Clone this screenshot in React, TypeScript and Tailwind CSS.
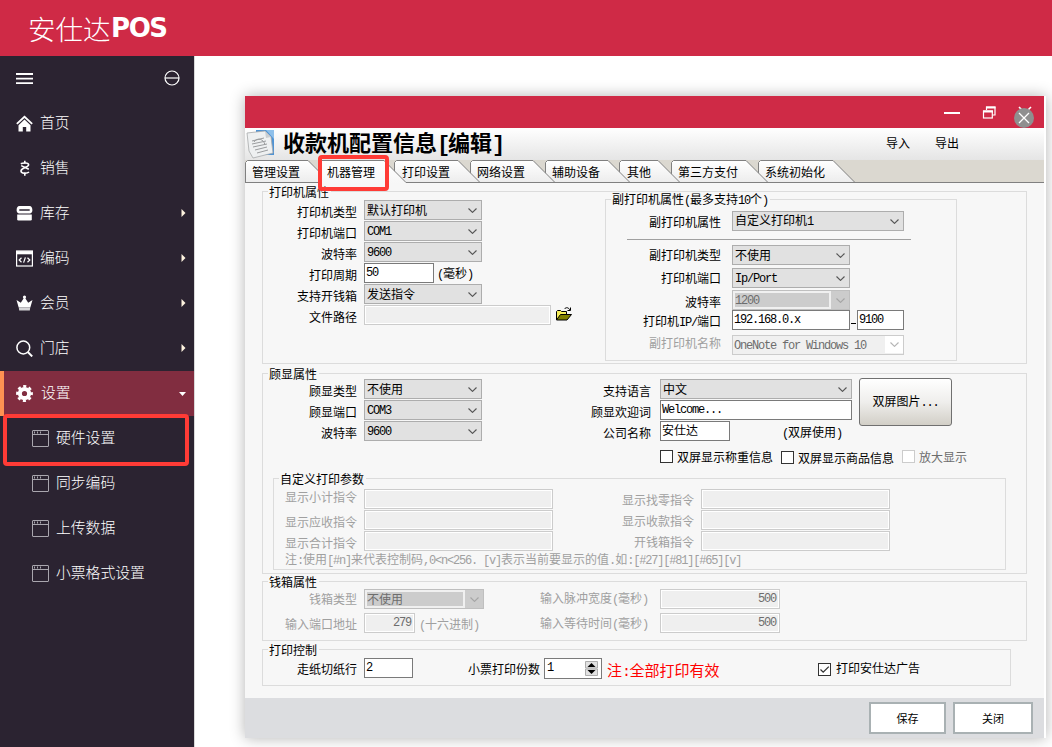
import type { ReactNode } from "react";
import clsx from "clsx";

/* SimSun-like metrics: 12px per chinese char, 6px per latin char */
function Txt({ children }: { children: string }) {
    return (
        <span className="whitespace-pre">
            {children.split(/([\x20-\x7e]+)/).map((part, i) => (
                i % 2 === 1
                ? <span key={i} className="font-['Liberation_Mono',monospace] tracking-[-0.1em]">{part}</span>
                : <span key={i}>{part}</span>
            ))}
        </span>
    )
}

function Chevron({ className = "text-[#555555]" }: { className?: string }) {
    return (
        <svg width="9" height="5" viewBox="0 0 9 5" fill="none" stroke="currentColor" strokeWidth="1.1" className={clsx("shrink-0", className)}>
            <path d="M0.5 0.5 4.5 4.4 8.5 0.5" />
        </svg>
    )
}

interface ControlProps {
    value?: string,
    className?: string,
    disabled?: boolean
}

function Select({ value = "", className = "w-[118px]", disabled }: ControlProps) {
    if (disabled) {
        return (
            <div className={clsx("h-5 shrink-0 flex border border-[#bfbfbf] bg-[#f0f0f0] text-[#6d6d6d]", className)}>
                <div className="flex-1 m-[2px] bg-[#cccccc] flex items-center pb-px"><Txt>{value}</Txt></div>
                <div className="w-[18px] bg-[#cccccc] flex justify-center items-center"><Chevron className="text-[#a5a5a5]" /></div>
            </div>
        )
    }

    return (
        <div className={clsx("h-5 shrink-0 flex items-center justify-between border border-[#adadad] bg-[#e1e1e1] pl-0.5 pr-1", className)}>
            <Txt>{value}</Txt>
            <Chevron />
        </div>
    )
}

function Input({ value = "", className, disabled }: ControlProps) {
    return (
        <div className={clsx(
            "h-5 shrink-0 flex items-center border pl-px pr-[3px] pb-[3px]",
            disabled ? "border-[#cccccc] bg-[#efefef] text-[#6d6d6d] shadow-[inset_0_0_0_1px_#ffffff]" : "border-[#7a7a7a] bg-white",
            className
        )}>
            <Txt>{value}</Txt>
        </div>
    )
}

interface RowProps {
    label: string,
    labelClass?: string,
    className?: string,
    disabled?: boolean,
    children: ReactNode
}

function Row({ label, labelClass = "w-[94px] mr-[7px] pt-1", className, disabled, children }: RowProps) {
    return (
        <div className={clsx("flex h-5", className)}>
            <div className={clsx("h-5 shrink-0 flex items-center justify-end", labelClass, disabled && "text-[#a0a0a0]")}>
                <Txt>{label}</Txt>
            </div>
            {children}
        </div>
    )
}

function Group({ legend, className, children }: { legend: string, className: string, children: ReactNode }) {
    return (
        <div className={clsx("relative shrink-0 border border-[#dcdcdc]", className)}>
            <div className="absolute -top-2 left-[5px] h-4 pl-px pr-0.5 flex items-center bg-[#f7f7f7]"><Txt>{legend}</Txt></div>
            {children}
        </div>
    )
}

function Check({ label, checked, disabled, className, labelClass }: { label: string, checked?: boolean, disabled?: boolean, className?: string, labelClass?: string }) {
    return (
        <div className={clsx("flex items-center h-[13px]", disabled && "text-[#6d6d6d]", className)}>
            <div className={clsx("w-[13px] h-[13px] mr-1 border bg-white", disabled ? "border-[#cccccc]" : "border-[#333333]")}>
                {checked && (
                    <svg width="11" height="11" viewBox="0 0 11 11" fill="none" stroke="#333333" strokeWidth="1.3">
                        <path d="M1.5 5.5 4.2 8.2 9.8 2.6" />
                    </svg>
                )}
            </div>
            <span className={labelClass}>{label}</span>
        </div>
    )
}

const tabs = [
    { name: "管理设置", shape: 63, box: "w-[74px] pl-[7px]" },
    { name: "机器管理", shape: 65, box: "w-[75px] pl-[8px]", active: true },
    { name: "打印设置", shape: 64, box: "w-[76px] pl-[8px]" },
    { name: "网络设置", shape: 63, box: "w-[75px] pl-[7px]" },
    { name: "辅助设备", shape: 63, box: "w-[74px] pl-[7px]" },
    { name: "其他", shape: 39, box: "w-[52px] pl-[8px]" },
    { name: "第三方支付", shape: 75, box: "w-[87px] pl-[7px]" },
    { name: "系统初始化", shape: 75, box: "w-[97px] pl-[7px]" }
]

function Tabs() {
    return (
        <div className="relative h-[23px] shrink-0 flex bg-[#dbd8d0] border-b border-[#808080]">
            {tabs.map(({ name, shape, box, active }, i) => (
                <div key={name} className={clsx("relative h-[23px] shrink-0 flex items-center pt-px", box)} style={{ zIndex: active ? 10 : 8 - i }}>
                    <svg className="absolute left-0 top-0" width={shape + 23} height="23">
                        <defs>
                            <linearGradient id={`tab${i}`} x2="0" y2="1">
                                <stop offset="0" stopColor="#ffffff" />
                                <stop offset="1" stopColor={active ? "#f7f7f7" : "#ececec"} />
                            </linearGradient>
                        </defs>
                        <path d={`M0.5 23V2.5L2.5 0.5H${shape}L${shape + 22} 22.5V23Z`} fill={`url(#tab${i})`} />
                        <path d={`M0.5 22.5V2.5L2.5 0.5H${shape}L${shape + 22} 22.5${active ? "" : "H0"}`} fill="none" stroke="#808080" />
                    </svg>
                    <span className="relative">{name}</span>
                </div>
            ))}
            <div className="absolute z-20 left-[73px] -top-[5px] w-[71px] h-9 border-4 border-[#ff3b36] rounded" />
        </div>
    )
}

function WindowIcon() {
    return (
        <svg width="17" height="17" viewBox="0 0 17 17" fill="none" stroke="#a9a6ae">
            <rect x="0.5" y="0.5" width="16" height="16" rx="0.5" />
            <path d="M1 4.5H16M2.5 1.5V3.5M5.5 1.5V3.5M8.5 1.5V3.5" />
        </svg>
    )
}

const icons = {
    home: (
        <g fill="#ffffff">
            <path d="M8.5 0.5 0.2 8.2 1.5 9.5 8.5 3 15.5 9.5 16.8 8.2Z" />
            <path d="M8.5 4.6 2.5 10.2V16.5H6.8V12H10.2V16.5H14.5V10.2Z" />
        </g>
    ),
    sale: (
        <g fill="none" stroke="#ffffff" strokeWidth="1.6">
            <path d="M4.8 3.8C7 2.6 12.6 2.4 12.6 4.8 12.6 7.6 5 7.6 5 11 5 13.8 11 13.8 13 12" />
            <path d="M8.8 0.8V3.4M5.2 5.6 12.8 9.2M8.8 12.6V15.8" />
        </g>
    ),
    stock: (
        <g fill="#ffffff">
            <path fillRule="evenodd" d="M3.5 1H13.5C15.5 1 16.4 3 16.4 5.2 16.4 7 15.3 8.4 13.8 8.4H3.2C1.7 8.4 0.6 7 0.6 5.2 0.6 3 1.5 1 3.5 1ZM3.3 4.3V5.7H13.7V4.3Z" />
            <path d="M1.2 9.6H15.8V14.2Q15.8 15.5 14.5 15.5H2.5Q1.2 15.5 1.2 14.2Z" />
        </g>
    ),
    code: (
        <g fill="none" stroke="#ffffff">
            <rect x="0.6" y="1" width="15.8" height="15" strokeWidth="1.2" />
            <path d="M0.5 2.7H16.5" strokeWidth="3.2" />
            <path d="M5.5 7.8 3.2 10 5.5 12.2M11.5 7.8 13.8 10 11.5 12.2M9.4 7.4 7.6 12.6" strokeWidth="1.2" />
        </g>
    ),
    member: (
        <g>
            <path d="M0.5 5 4.8 7.8 8.5 2 12.2 7.8 16.5 5 14.3 12.5H2.7Z" fill="#ffffff" />
            <circle cx="8.5" cy="2" r="1.6" fill="#ffffff" />
            <path d="M2.8 12.5H14.2L13.8 15.5H3.2Z" fill="#d6d5d8" />
        </g>
    ),
    shop: (
        <g fill="none" stroke="#ffffff" strokeWidth="1.5">
            <circle cx="7.3" cy="7.5" r="6.4" />
            <path d="M11.8 12 16.2 16.4" strokeWidth="2" />
        </g>
    ),
    setting: (
        <g>
            <circle cx="8.5" cy="8.5" r="4.6" fill="none" stroke="#ffffff" strokeWidth="4" />
            <circle cx="8.5" cy="8.5" r="7.2" fill="none" stroke="#ffffff" strokeWidth="2.4" strokeDasharray="3.1 2.555" strokeDashoffset="1.55" />
        </g>
    )
}

const menu = [
    { name: "首页", icon: icons.home },
    { name: "销售", icon: icons.sale },
    { name: "库存", icon: icons.stock, more: true },
    { name: "编码", icon: icons.code, more: true },
    { name: "会员", icon: icons.member, more: true },
    { name: "门店", icon: icons.shop, more: true }
]

const submenu = ["硬件设置", "同步编码", "上传数据", "小票格式设置"]

function Sidebar() {
    return (
        <aside className="relative w-[195px] shrink-0 bg-[#2b2331] border-r border-[#d9d9d9] text-white text-[14.8px]">
            <div className="h-[45px] flex items-center justify-between pl-4 pr-[14px] pb-px">
                <svg width="17" height="11" viewBox="0 0 17 11" fill="#ffffff">
                    <path d="M0 0H17V2H0ZM0 4.7H17V6.5H0ZM0 9.2H17V11H0Z" />
                </svg>
                <svg width="16" height="16" viewBox="0 0 16 16" fill="none" stroke="#ffffff" strokeWidth="1.2">
                    <circle cx="8" cy="8" r="7" />
                    <path d="M1 8H15" />
                </svg>
            </div>
            {menu.map(({ name, icon, more }) => (
                <div key={name} className="h-[45px] flex items-center pl-4 pr-2 pb-0.5 font-light">
                    <svg width="17" height="17" viewBox="0 0 17 17" className="mt-0.5">{icon}</svg>
                    <span className="flex-1 ml-[7px] pb-px">{name}</span>
                    {more && <svg width="5" height="8" viewBox="0 0 5 8" fill="#fff4e0"><path d="M0.5 0 4.5 4 0.5 8Z" /></svg>}
                </div>
            ))}
            <div className="h-[45px] flex items-center pl-3 pr-2 pb-0.5 border-l-4 border-[#ff9152] bg-[#812d40] font-light">
                <svg width="17" height="17" viewBox="0 0 17 17" className="mt-0.5">{icons.setting}</svg>
                <span className="flex-1 ml-2 pb-px">设置</span>
                <svg width="7" height="4" viewBox="0 0 7 4" className="mt-0.5" fill="#ffffff"><path d="M0 0H7L3.5 4Z" /></svg>
            </div>
            {submenu.map((name) => (
                <div key={name} className="h-[45px] flex items-center pl-8 font-light">
                    <WindowIcon />
                    <span className="ml-[7px] pb-[3px]">{name}</span>
                </div>
            ))}
            <div className="absolute left-[3px] top-[358px] w-[186px] h-[52px] border-4 border-[#ff3b36] rounded" />
        </aside>
    )
}

function TitleBar() {
    return (
        <div className="h-8 shrink-0 bg-[#cf2a46] flex justify-end">
            <svg width="109" height="32" viewBox="0 0 109 32" fill="none" stroke="#ffffff">
                <path d="M9 17H25" strokeWidth="2" />
                <path d="M51.5 14V11H60V19H57.5" strokeWidth="1.2" />
                <path d="M51 11.5H60.5" strokeWidth="2" />
                <rect x="48.5" y="15" width="8.8" height="7" strokeWidth="1.2" />
                <path d="M48 15.5H58" strokeWidth="2" />
                <path d="M84 11 88 15M96 11 92 15" strokeWidth="1.6" />
                <circle cx="89" cy="22" r="10" fill="#8f8f8f" stroke="none" />
                <path d="M84 17 94 27M94 17 84 27" strokeWidth="1.3" />
            </svg>
        </div>
    )
}

function DocIcon() {
    return (
        <svg width="30" height="30" viewBox="0 0 30 30">
            <rect x="11" y="1" width="18" height="25" fill="#4f93d4" />
            <path d="M21 1H29V10Z" fill="#8fc0ea" />
            <path d="M2 4 20 2 26 8 28 24 8 29 4 22Z" fill="#eef0f1" stroke="#a7a9ab" strokeWidth="0.8" />
            <path d="M20 2 21 9 26 8Z" fill="#c9ced2" />
            <path d="M7 12 19 9M7 15 21 12M8 18 22 15M10 21 22 18M12 24 23 21M9 13C12 8 19 10 20 16" stroke="#9a9c9e" fill="none" />
        </svg>
    )
}

function FolderIcon() {
    return (
        <svg width="17" height="14" viewBox="0 0 17 14" className="ml-[5px] mt-0.5">
            <path d="M0.5 13V4.5L1.5 3.5H4.5L5.5 4.5H10.5V7" fill="#f7ef5a" stroke="#000000" />
            <path d="M0.5 13 4.5 7.5H15.5L11 13Z" fill="#808000" stroke="#000000" />
            <path d="M8.5 2C10 0 12.5 0.3 14 3M14.5 0.5V3.5H11.5" fill="none" stroke="#000000" />
        </svg>
    )
}

const subLabel = "w-[115px] mr-[11px]"

function PrinterGroup() {
    return (
        <Group legend="打印机属性" className="w-[765px] h-[173px] flex">
            <div className="w-[342px] pt-2 flex flex-col gap-px">
                <Row label="打印机类型"><Select value="默认打印机" /></Row>
                <Row label="打印机端口"><Select value="COM1" /></Row>
                <Row label="波特率"><Select value="9600" /></Row>
                <Row label="打印周期">
                    <Input value="50" className="w-[70px]" />
                    <span className="ml-[3px]"><Txt>(毫秒)</Txt></span>
                </Row>
                <Row label="支持开钱箱"><Select value="发送指令" /></Row>
                <Row label="文件路径">
                    <Input disabled className="w-[187px]" />
                    <FolderIcon />
                </Row>
            </div>
            <Group legend="副打印机属性(最多支持10个)" className="w-[352px] h-[162px] mt-[7px] pt-[11px]">
                <Row label="副打印机属性" labelClass={clsx(subLabel, "pt-0.5")}><Select value="自定义打印机1" className="w-[172px]" /></Row>
                <div className="mt-2 ml-[21px] w-[284px] h-px bg-[#a0a0a0]" />
                <Row label="副打印机类型" labelClass={subLabel} className="mt-[5px]"><Select value="不使用" /></Row>
                <Row label="打印机端口" labelClass={subLabel} className="mt-[3px]"><Select value="Ip/Port" /></Row>
                <Row label="波特率" labelClass={clsx(subLabel, "pt-1")} className="mt-0.5"><Select value="1200" disabled /></Row>
                <Row label="打印机IP/端口" labelClass={clsx(subLabel, "pt-1")}>
                    <Input value="192.168.0.x" className="w-[118px]" />
                    <div className="w-[7px] flex items-end px-px pb-[6px]"><div className="w-full h-px bg-black" /></div>
                    <Input value="9100" className="w-[47px]" />
                </Row>
                <Row label="副打印机名称" labelClass={clsx(subLabel, "pb-1")} className="mt-[5px]" disabled>
                    <div className="w-[172px] h-5 flex items-center justify-between border border-[#cccccc] bg-[#f0f0f0] pl-px pb-px text-[#6d6d6d]">
                        <Txt>OneNote for Windows 10</Txt>
                        <div className="w-[18px] h-full flex items-center justify-center bg-white"><Chevron className="text-[#b5b5b5]" /></div>
                    </div>
                </Row>
            </Group>
        </Group>
    )
}

const rightLabel = "w-[88px] mr-[9px] pt-[3px]"
const displayLabel = "w-[94px] mr-[7px] pt-[3px]"

function DisplayGroup() {
    return (
        <Group legend="顾显属性" className="w-[765px] h-[201px] mt-[9px] pt-[5px]">
            <div className="flex h-[99px]">
                <div className="w-[300px] flex flex-col gap-px">
                    <Row label="顾显类型" labelClass={displayLabel}><Select value="不使用" /></Row>
                    <Row label="顾显端口" labelClass={displayLabel}><Select value="COM3" /></Row>
                    <Row label="波特率" labelClass={displayLabel}><Select value="9600" /></Row>
                </div>
                <div>
                    <div className="flex h-[62px]">
                        <div className="w-[296px] flex flex-col gap-px">
                            <Row label="支持语言" labelClass={rightLabel}><Select value="中文" className="w-[192px]" /></Row>
                            <Row label="顾显欢迎词" labelClass={rightLabel}><Input value="Welcome..." className="w-[192px]" /></Row>
                            <Row label="公司名称" labelClass={rightLabel}>
                                <Input value="安仕达" className="w-[70px]" />
                                <span className="ml-[52px] pt-px"><Txt>(双屏使用)</Txt></span>
                            </Row>
                        </div>
                        <div className="w-[93px] h-12 -mt-px flex items-center justify-center rounded-[3px] border border-[#707070] bg-linear-to-b from-white via-[#efeeec] to-[#d2cfc7]">
                            <Txt>双屏图片...</Txt>
                        </div>
                    </div>
                    <div className="flex pl-[97px] pt-[9px]">
                        <Check label="双屏显示称重信息" className="w-[121px]" />
                        <Check label="双屏显示商品信息" className="w-[121px] mt-px" />
                        <Check label="放大显示" disabled />
                    </div>
                </div>
            </div>
            <Group legend="自定义打印参数" className="w-[733px] h-[92px] ml-[10px] pt-[10px] text-[#a0a0a0] [&>div:first-child]:text-black">
                <div className="flex">
                    <div className="w-[279px] flex flex-col gap-px">
                        <Row label="显示小计指令" labelClass="w-[83px] mr-[7px] pb-1"><Input disabled className="w-[189px]" /></Row>
                        <Row label="显示应收指令" labelClass="w-[83px] mr-[7px] pt-[3px]"><Input disabled className="w-[189px]" /></Row>
                        <Row label="显示合计指令" labelClass="w-[83px] mr-[7px] pt-[3px]"><Input disabled className="w-[189px]" /></Row>
                    </div>
                    <div className="flex flex-col gap-px">
                        <Row label="显示找零指令" labelClass="w-[141px] mr-[7px] pt-0.5"><Input disabled className="w-[189px]" /></Row>
                        <Row label="显示收款指令" labelClass="w-[141px] mr-[7px] pt-0.5"><Input disabled className="w-[189px]" /></Row>
                        <Row label="开钱箱指令" labelClass="w-[141px] mr-[7px] pt-0.5"><Input disabled className="w-[189px]" /></Row>
                    </div>
                </div>
                <div className="pl-[11px] h-[18px] flex items-center"><Txt>{"注:使用[#n]来代表控制码,0<n<256. [v]表示当前要显示的值.如:[#27][#81][#65][v]"}</Txt></div>
            </Group>
        </Group>
    )
}

function CashboxGroup() {
    return (
        <Group legend="钱箱属性" className="w-[765px] h-[60px] mt-[7px] pt-[7px] flex">
            <div className="w-[277px] flex flex-col gap-1">
                <Row label="钱箱类型" labelClass="w-[94px] mr-[7px]" disabled><Select value="不使用" className="w-[120px]" disabled /></Row>
                <Row label="输入端口地址" labelClass="w-[94px] mr-[7px] pt-px" disabled>
                    <Input value="279" className="w-[51px] justify-end" disabled />
                    <span className="ml-1 pt-px text-[#a0a0a0]"><Txt>(十六进制)</Txt></span>
                </Row>
            </div>
            <div className="flex flex-col gap-1">
                <Row label="输入脉冲宽度(毫秒)" labelClass="w-[108px] mr-[12px]" disabled><Input value="500" className="w-[120px] justify-end" disabled /></Row>
                <Row label="输入等待时间(毫秒)" labelClass="w-[108px] mr-[12px] pt-px" disabled><Input value="500" className="w-[120px] justify-end" disabled /></Row>
            </div>
        </Group>
    )
}

function PrintControlGroup() {
    return (
        <Group legend="打印控制" className="w-[749px] h-[37px] mt-2 pt-2 flex">
            <Row label="走纸切纸行" labelClass="w-[94px] mr-[7px] pt-0.5"><Input value="2" className="w-[49px]" /></Row>
            <Row label="小票打印份数" labelClass="w-[127px] mr-[4px] pt-0.5">
                <div className="w-[58px] h-[21px] flex items-center justify-between border border-[#7a7a7a] bg-white px-[2px]">
                    <div className="pb-1"><Txt>1</Txt></div>
                    <svg width="13" height="15" viewBox="0 0 13 15" className="mr-px">
                        <path d="M0.5 0.5H12.5V7H0.5ZM0.5 8H12.5V14.5H0.5Z" fill="#e1e1e1" stroke="#adadad" />
                        <path d="M2.5 6H10.5L6.5 2ZM2.5 9H10.5L6.5 13Z" fill="#000000" />
                    </svg>
                </div>
            </Row>
            <div className="ml-[5px] w-[211px] pt-px text-[15px] leading-[22px] text-[#ff0000]"><Txt>注:全部打印有效</Txt></div>
            <div className="pt-[5px]"><Check label="打印安仕达广告" checked className="gap-px" labelClass="pb-[3px]" /></div>
        </Group>
    )
}

export default function App() {
    return (
        <div className="w-[1052px] h-[747px] overflow-hidden flex flex-col bg-white font-['Noto_Sans_CJK_SC',sans-serif]">
            <header className="h-14 shrink-0 flex items-center pl-7 bg-[#cf2a46] text-white text-[27.5px] leading-9 whitespace-nowrap">
                <span className="w-[83px] font-light">安仕达</span>
                <span className="font-['DejaVu_Sans',sans-serif] font-bold text-[26px] tracking-[-0.055em]">POS</span>
            </header>
            <div className="flex flex-1 min-h-0">
                <Sidebar />
                <main className="flex-1 pl-[50px] pt-10">
                    <div className="w-[801px] h-[642px] flex flex-col border-r-2 border-white text-black text-xs leading-5 bg-[#f7f7f7] shadow-[0_0_14px_rgba(0,0,0,0.3)]">
                        <TitleBar />
                        <div className="h-8 shrink-0 flex items-center bg-linear-to-b from-white to-[#e5e5e5]">
                            <DocIcon />
                            <h1 className="ml-2 pb-0.5 flex-1 text-[22px] leading-none font-bold"><Txt>收款机配置信息[编辑]</Txt></h1>
                            <span className="mr-[25px] pb-0.5">导入</span>
                            <span className="mr-[85px] pb-0.5">导出</span>
                        </div>
                        <Tabs />
                        <div className="flex-1 flex flex-col pl-[17px] pt-2">
                            <PrinterGroup />
                            <DisplayGroup />
                            <CashboxGroup />
                            <PrintControlGroup />
                        </div>
                        <div className="h-10 shrink-0 flex justify-end items-center gap-[7px] pr-[11px] bg-[#dcdde0] text-[11px]">
                            <div className="w-[77px] h-8 flex items-center justify-center border-2 border-[#a9b1b3] bg-white">保存</div>
                            <div className="w-20 h-8 flex items-center justify-center border-2 border-[#a9b1b3] bg-white">关闭</div>
                        </div>
                    </div>
                </main>
            </div>
        </div>
    )
}
